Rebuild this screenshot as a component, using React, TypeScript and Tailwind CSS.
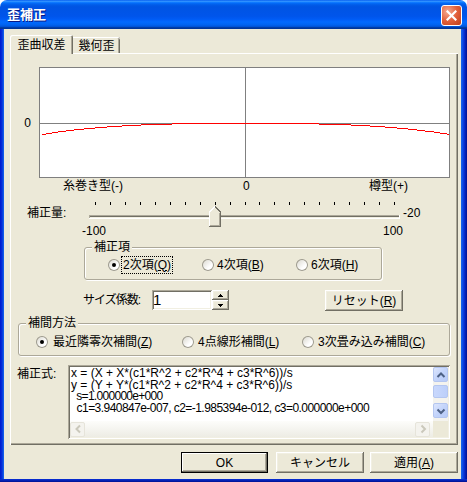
import React from 'react';

const raised =
  'shadow-[inset_-1px_-1px_0_#716f64,inset_1px_1px_0_#ffffff,inset_-2px_-2px_0_#aca899,inset_2px_2px_0_#f1efe2]';
const sunken =
  'shadow-[inset_1px_1px_0_#aca899,inset_-1px_-1px_0_#ffffff,inset_2px_2px_0_#716f64,inset_-2px_-2px_0_#f1efe2]';

// red curve, in graph pixels: [x0, x1, y]
const curve: [number, number, number][] = [
  [3, 7, 67], [7, 13, 66], [13, 19, 65], [19, 27, 64], [27, 35, 63], [35, 45, 62],
  [45, 56, 61], [56, 68, 60], [68, 83, 59], [83, 102, 58], [102, 133, 57], [133, 280, 56],
  [280, 312, 57], [312, 331, 58], [331, 346, 59], [346, 358, 60], [358, 369, 61],
  [369, 378, 62], [378, 386, 63], [386, 395, 64], [395, 401, 65], [401, 408, 66], [408, 410, 67],
];

function Graph() {
  return (
    <svg width="411" height="111" className="block shrink-0" shapeRendering="crispEdges">
      <rect x="0" y="0" width="411" height="111" fill="#ffffff" />
      <rect x="0.5" y="0.5" width="410" height="110" fill="none" stroke="#7f7f7f" />
      <rect x="1" y="56" width="409" height="1" fill="#808080" />
      <rect x="206" y="1" width="1" height="109" fill="#808080" />
      {curve.map(([a, b, y]) => (
        <rect key={a} x={a} y={y} width={b - a} height="1" fill="#ff0000" />
      ))}
    </svg>
  );
}

function Slider() {
  const ticks = Array.from({ length: 21 }, (_, i) => Math.round(6 + 14.95 * i));
  return (
    <svg width="311" height="26" className="block shrink-0 overflow-visible" shapeRendering="crispEdges">
      {ticks.map((x) => (
        <rect key={x} x={x} y="1" width="1" height="3" fill="#000000" />
      ))}
      <rect x="0" y="14" width="310" height="1" fill="#aca899" />
      <rect x="1" y="15" width="309" height="1" fill="#716f64" />
      <rect x="1" y="16" width="309" height="1" fill="#f1efe2" />
      <rect x="0" y="17" width="311" height="1" fill="#ffffff" />
      <rect x="0" y="14" width="1" height="3" fill="#aca899" />
      <rect x="310" y="14" width="1" height="4" fill="#ffffff" />
      {/* thumb at -20 */}
      <polygon points="120,25 120,11 126,5 132,11 132,25" fill="#ece9d8" />
      <polyline points="120.5,25 120.5,11 126,5.5" fill="none" stroke="#ffffff" />
      <polyline points="126,5.5 131.5,11 131.5,25.5 120,25.5" fill="none" stroke="#716f64" />
      <polyline points="130.5,11.5 130.5,24.5 121,24.5" fill="none" stroke="#aca899" />
    </svg>
  );
}

function Radio({ checked = false }: { checked?: boolean }) {
  return (
    <span className="flex h-[12px] w-[12px] shrink-0 items-center justify-center rounded-full bg-[linear-gradient(135deg,#d6d4ca_0%,#ffffff_65%)] shadow-[inset_0_0_0_1px_#9d9a8c]">
      {checked && <span className="h-[4px] w-[4px] rounded-full bg-black" />}
    </span>
  );
}

function Group({ label, className, children }: { label: string; className: string; children: React.ReactNode }) {
  return (
    <div
      className={`relative shrink-0 rounded-[3px] border border-[#aca899] shadow-[inset_1px_1px_0_#ffffff,1px_1px_0_#ffffff] ${className}`}
    >
      <span className="absolute -top-[8px] left-[7px] bg-[#ece9d8] px-[2px] leading-[14px]">{label}</span>
      {children}
    </div>
  );
}

function Button({ children, className = '', isDefault = false }: { children: React.ReactNode; className?: string; isDefault?: boolean }) {
  return (
    <div
      className={`flex shrink-0 items-center justify-center bg-[#ece9d8] ${
        isDefault
          ? 'shadow-[inset_0_0_0_1px_#000000,inset_-2px_-2px_0_#716f64,inset_2px_2px_0_#ffffff,inset_-3px_-3px_0_#aca899]'
          : raised
      } ${className}`}
    >
      {children}
    </div>
  );
}

function ScrollArrow({ dir, disabled = false, className = '' }: { dir: 'up' | 'down' | 'left' | 'right'; disabled?: boolean; className?: string }) {
  const pts = {
    up: '2.5,8 6,4.5 9.5,8',
    down: '2.5,4.5 6,8 9.5,4.5',
    left: '8,2.5 4.5,6 8,9.5',
    right: '4.5,2.5 8,6 4.5,9.5',
  }[dir];
  return (
    <div
      className={`flex shrink-0 items-center justify-center rounded-[2px] border ${
        disabled
          ? 'border-[#e6e4da] bg-[#f4f3ee]'
          : 'border-[#b4c6f0] bg-[linear-gradient(135deg,#dde6fd_0%,#c3d4fb_50%,#b7caf7_100%)]'
      } ${className}`}
    >
      <svg width="12" height="12">
        <polyline points={pts} fill="none" stroke={disabled ? '#cac8bb' : '#4d6185'} strokeWidth="2" />
      </svg>
    </div>
  );
}

function SpinArrow({ up }: { up: boolean }) {
  return (
    <div className={`flex h-[10px] items-center justify-center bg-[#ece9d8] ${raised}`}>
      <svg width="5" height="3" shapeRendering="crispEdges">
        <polygon points={up ? '2.5,0 5,3 0,3' : '0,0 5,0 2.5,3'} fill="#000000" />
      </svg>
    </div>
  );
}

export default function App() {
  return (
    <div className="h-[482px] w-[467px] bg-white font-['Liberation_Sans','Noto_Sans_CJK_JP',sans-serif] text-[12px] leading-[14px] text-black">
      <div className="flex h-full flex-col overflow-hidden rounded-t-[7px]">
        {/* title bar */}
        <div className="flex h-[29px] shrink-0 items-start justify-between bg-[linear-gradient(to_bottom,#0058ee_0%,#3593ff_4%,#288eff_6%,#127dff_8%,#036ffc_10%,#0262ee_14%,#0057e5_20%,#0054e3_24%,#0055eb_56%,#005bf5_66%,#026afe_76%,#0062ef_86%,#0052d6_92%,#0040ab_94%,#003092_100%)]">
          <span className="pl-[7px] pt-[7px] text-[13px] font-bold leading-[15px] text-white [text-shadow:1px_1px_0_#0a1883]">
            歪補正
          </span>
          <div className="mr-[5px] mt-[5px] flex h-[21px] w-[21px] items-center justify-center rounded-[3px] border border-white bg-[radial-gradient(circle_at_30%_30%,#f5ab92_0%,#e2603a_50%,#c03d19_100%)]">
            <svg width="11" height="11">
              <path d="M1.5 1.5 L9.5 9.5 M9.5 1.5 L1.5 9.5" stroke="#ffffff" strokeWidth="2.2" strokeLinecap="square" />
            </svg>
          </div>
        </div>

        <div className="flex h-[450px] shrink-0">
          <div className="w-[4px] bg-[linear-gradient(to_right,#0019cf,#0831d9,#166aee)]" />

          {/* dialog body */}
          <div className="flex w-[457px] flex-col bg-[#ece9d8] pl-[6px] pt-[6px]">
            {/* tabs */}
            <div className="flex h-[18px] shrink-0 items-start">
              <div className="relative z-10 flex h-[19px] w-[63px] items-center justify-center rounded-t-[2px] bg-[#ece9d8] shadow-[inset_1px_1px_0_#ffffff,inset_-1px_0_0_#716f64,inset_-2px_0_0_#aca899]">
                歪曲収差
              </div>
              <div className="mt-[2px] flex h-[16px] w-[47px] items-center justify-center rounded-tr-[2px] pt-[1px] shadow-[inset_0_1px_0_#ffffff,inset_-1px_0_0_#716f64,inset_-2px_0_0_#aca899]">
                幾何歪
              </div>
            </div>

            {/* tab page */}
            <div className="flex h-[392px] w-[448px] shrink-0 flex-col shadow-[inset_1px_1px_0_#ffffff,inset_-1px_-1px_0_#716f64,inset_-2px_-2px_0_#aca899]">
              <div className="mt-[14px] flex h-[111px] shrink-0 items-center">
                <span className="w-[29px] pr-[8px] text-right">0</span>
                <Graph />
              </div>

              <div className="flex h-[16px] shrink-0 leading-[16px]">
                <span className="ml-[53px] w-[180px]">糸巻き型(-)</span>
                <span className="w-[126px]">0</span>
                <span>樽型(+)</span>
              </div>

              <div className="mt-[7px] flex h-[24px] shrink-0 items-start">
                <span className="ml-[17px] w-[62px] leading-[24px]">補正量:</span>
                <Slider />
                <span className="ml-[3px] leading-[24px]">-20</span>
              </div>

              <div className="flex h-[12px] shrink-0 leading-[12px]">
                <span className="ml-[72px] w-[301px]">-100</span>
                <span>100</span>
              </div>

              <Group label="補正項" className="ml-[74px] mt-[10px] h-[33px] w-[298px]">
                <div className="flex h-full items-center pl-[23px] pt-[2px]">
                  <div className="flex w-[94px] items-center gap-[3px]">
                    <Radio checked />
                    <span className="outline-1 outline-offset-[1px] outline-dotted outline-black">
                      2次項(<u>Q</u>)
                    </span>
                  </div>
                  <div className="flex w-[94px] items-center gap-[3px]">
                    <Radio />
                    <span>
                      4次項(<u>B</u>)
                    </span>
                  </div>
                  <div className="flex items-center gap-[3px]">
                    <Radio />
                    <span>
                      6次項(<u>H</u>)
                    </span>
                  </div>
                </div>
              </Group>

              <div className="mt-[10px] flex h-[21px] shrink-0 items-start">
                <span className="ml-[73px] w-[69px] leading-[20px] tracking-[-1px]">サイズ係数:</span>
                <div className={`h-[20px] w-[60px] bg-white pl-[1px] font-['Liberation_Sans',sans-serif] text-[15px] leading-[20px] ${sunken}`}>
                  1
                </div>
                <div className="flex h-[20px] w-[17px] flex-col">
                  <SpinArrow up />
                  <SpinArrow up={false} />
                </div>
                <Button className="ml-[96px] h-[21px] w-[78px]">
                  <span>
                    リセット(<u>R</u>)
                  </span>
                </Button>
              </div>

              <Group label="補間方法" className="ml-[8px] mt-[12px] h-[33px] w-[432px]">
                <div className="flex h-full items-center pl-[17px] pt-[4px]">
                  <div className="flex w-[146px] items-center gap-[5px]">
                    <Radio checked />
                    <span>
                      最近隣零次補間(<u>Z</u>)
                    </span>
                  </div>
                  <div className="flex w-[120px] items-center gap-[4px]">
                    <Radio />
                    <span>
                      4点線形補間(<u>L</u>)
                    </span>
                  </div>
                  <div className="flex items-center gap-[4px]">
                    <Radio />
                    <span>
                      3次畳み込み補間(<u>C</u>)
                    </span>
                  </div>
                </div>
              </Group>

              <div className="mt-[9px] flex h-[74px] shrink-0">
                <span className="ml-[7px] w-[51px] pt-[2px]">補正式:</span>
                <div className={`h-[74px] w-[382px] bg-white p-[2px] ${sunken}`}>
                  <div className="grid h-full grid-cols-[1fr_15px] grid-rows-[1fr_16px]">
                    <div className="overflow-hidden whitespace-pre pl-[1px] pt-[1px] font-['Liberation_Sans',sans-serif] text-[12px] leading-[11.5px]">
                      <div>{'x = (X + X*(c1*R^2 + c2*R^4 + c3*R^6))/s'}</div>
                      <div>{'y = (Y + Y*(c1*R^2 + c2*R^4 + c3*R^6))/s'}</div>
                      <div className="tracking-[-0.7px]">{'  s=1.000000e+000'}</div>
                      <div className="tracking-[-0.55px]">{'  c1=3.940847e-007, c2=-1.985394e-012, c3=0.000000e+000'}</div>
                    </div>
                    <div className="flex flex-col bg-[#f4f3ee]">
                      <ScrollArrow dir="up" className="h-[15px] w-[15px]" />
                      <div className="h-[3px]" />
                      <div className="h-[13px] rounded-[2px] border border-[#b4c6f0] bg-[linear-gradient(to_right,#c9d8fc,#bccffa)]" />
                      <div className="h-[5px]" />
                      <ScrollArrow dir="down" className="h-[15px] w-[15px]" />
                    </div>
                    <div className="flex items-center justify-between bg-[linear-gradient(to_bottom,#fdfdfb,#edece4)]">
                      <ScrollArrow dir="left" disabled className="h-[15px] w-[15px]" />
                      <ScrollArrow dir="right" disabled className="mr-[3px] h-[15px] w-[15px]" />
                    </div>
                    <div className="bg-[#ece9d8]" />
                  </div>
                </div>
              </div>
            </div>

            {/* dialog buttons */}
            <div className="ml-[171px] mt-[7px] flex h-[21px] shrink-0">
              <Button isDefault className="h-[21px] w-[87px]">
                OK
              </Button>
              <Button className="ml-[8px] h-[21px] w-[88px]">キャンセル</Button>
              <Button className="ml-[6px] h-[21px] w-[88px]">
                <span>
                  適用(<u>A</u>)
                </span>
              </Button>
            </div>
          </div>

          <div className="w-[6px] bg-[linear-gradient(to_left,#001090,#0831d9,#166aee)]" />
        </div>
        <div className="h-[3px] shrink-0 bg-[linear-gradient(to_top,#001090,#0831d9)]" />
      </div>
    </div>
  );
}
